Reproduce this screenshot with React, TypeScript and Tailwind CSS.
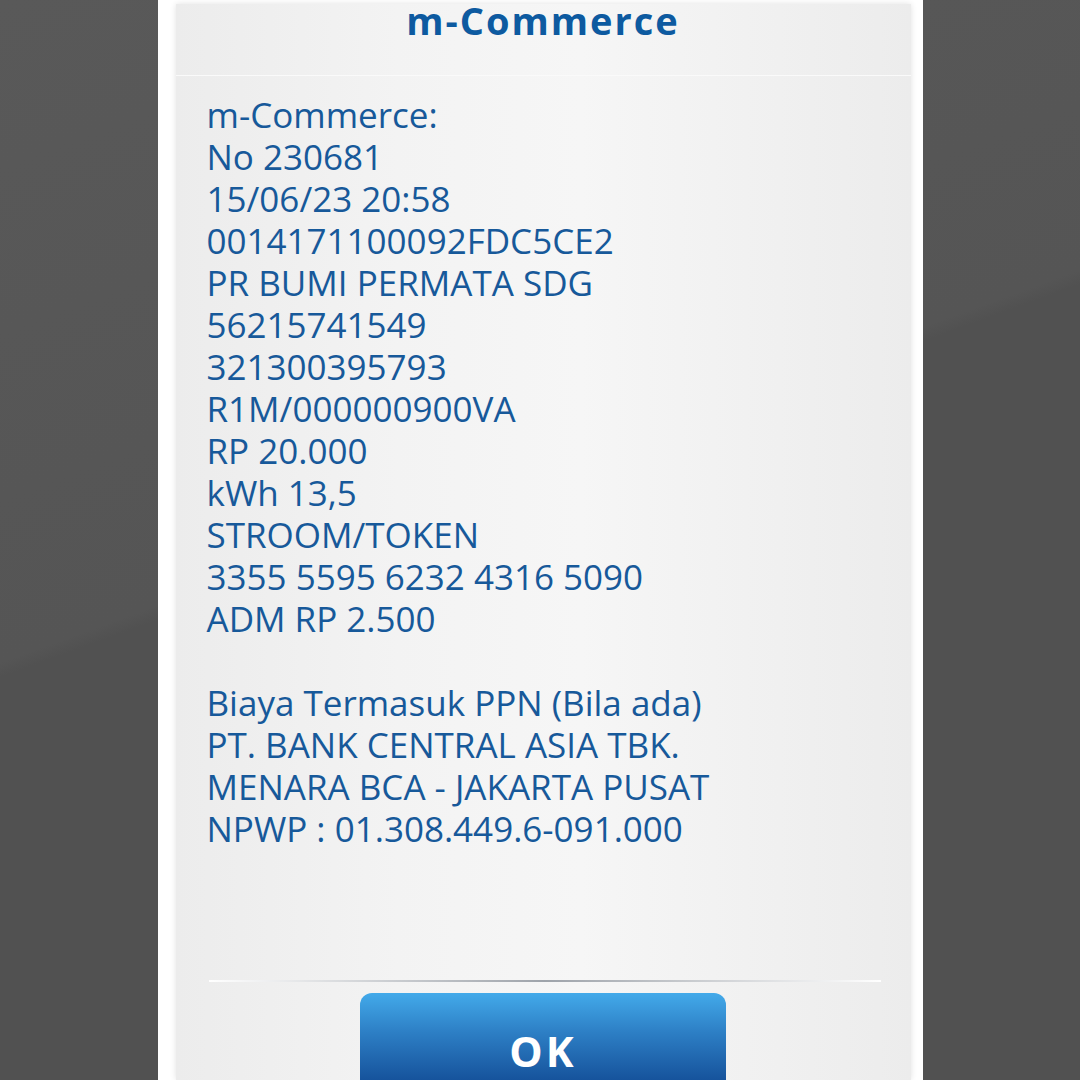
import React from "react";

const lines = [
  "m-Commerce:",
  "No 230681",
  "15/06/23 20:58",
  "0014171100092FDC5CE2",
  "PR BUMI PERMATA SDG",
  "56215741549",
  "321300395793",
  "R1M/000000900VA",
  "RP 20.000",
  "kWh 13,5",
  "STROOM/TOKEN",
  "3355 5595 6232 4316 5090",
  "ADM RP 2.500",
  "\u00a0",
  "Biaya Termasuk PPN (Bila ada)",
  "PT. BANK CENTRAL ASIA TBK.",
  "MENARA BCA - JAKARTA PUSAT",
  "NPWP : 01.308.449.6-091.000",
];

export default function App() {
  return (
    <div
      className="w-[1080px] h-[1080px] overflow-hidden flex justify-center bg-[linear-gradient(160deg,#595959_0%,#555555_45%,#515151_46%,#515151_100%)]"
      style={{ fontFamily: '"Open Sans", "Noto Sans", sans-serif' }}
    >
      <div className="w-[765px] h-[1080px] bg-white pl-[18px] pr-[12px] pt-[4px] flex flex-col">
        <div className="flex-1 flex flex-col bg-[linear-gradient(90deg,#ececec_0%,#f3f3f3_30%,#f6f6f6_55%,#ececec_100%)] shadow-[0_0_6px_rgba(0,0,0,0.12)]">
          <div className="h-[71px] flex items-center justify-center">
            <div className="text-[38px] font-bold text-[#0d5aa0] leading-none tracking-[2px] -mt-[40px]">
              m-Commerce
            </div>
          </div>
          <div className="h-[1px] bg-[#fafafa]" />
          <div className="pl-[31px] pt-[18px] text-[#17599a] text-[35px] leading-[42px]">
            {lines.map((l, i) => (
              <div key={i} className="whitespace-pre">
                {l}
              </div>
            ))}
          </div>
          <div className="flex-1" />
          <div className="ml-[33px] mr-[30px] h-[2px] bg-[linear-gradient(90deg,#ffffff_0%,#9ea3aa_50%,#ffffff_100%)]" />
          <div className="h-[11px]" />
          <div className="flex justify-center h-[87px]">
            <div className="w-[366px] h-[87px] rounded-t-[12px] bg-[linear-gradient(180deg,#43aaea_0%,#2d7fc5_45%,#16539c_100%)] flex justify-center pt-[37px]">
              <span className="text-white text-[42px] font-bold leading-none tracking-[3px]">OK</span>
            </div>
          </div>
        </div>
      </div>
    </div>
  );
}
